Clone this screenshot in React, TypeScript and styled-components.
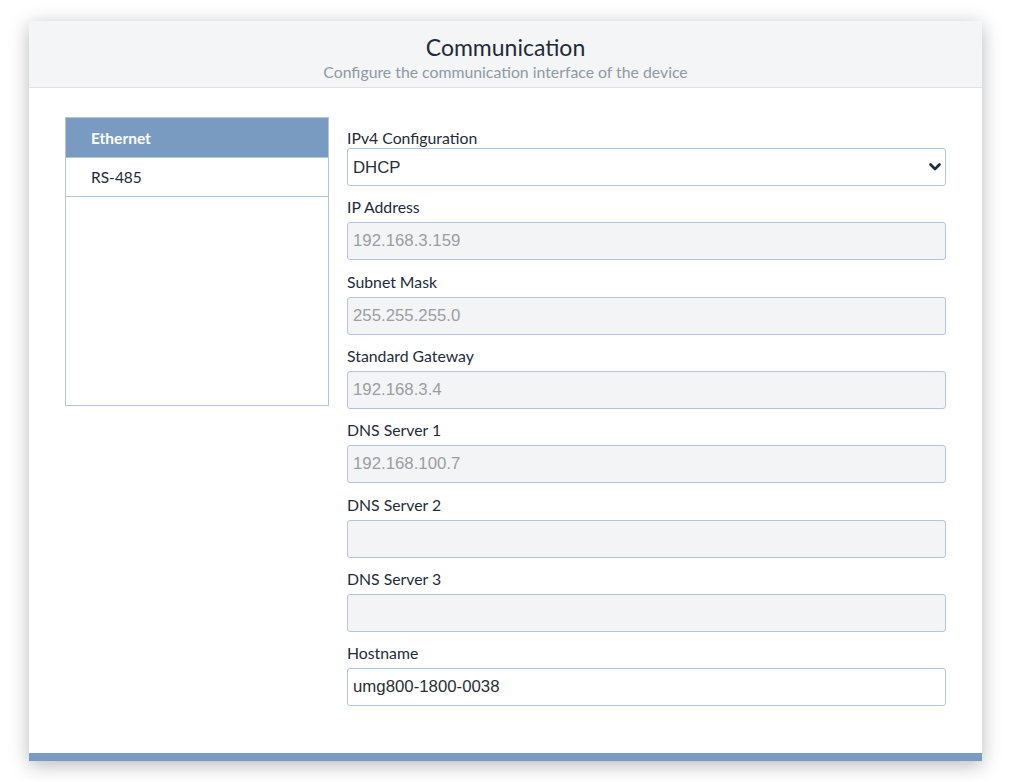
import React from "react";
import styled, { createGlobalStyle } from "styled-components";

const GlobalStyle = createGlobalStyle`
  html, body {
    margin: 0;
    padding: 0;
    background: #ffffff;
  }
  body {
    font-family: "Lato", "Open Sans", sans-serif;
  }
`;

const Page = styled.div`
  padding: 21px 28px 21px 29px;
`;

const Card = styled.div`
  width: 953px;
  background: #ffffff;
  box-shadow: 0 4px 18px rgba(0, 0, 0, 0.28);
  border-bottom: 8px solid #7a9bc1;
`;

const Header = styled.div`
  background: #f4f5f7;
  border-bottom: 1px solid #dde2e8;
  height: 67px;
  box-sizing: border-box;
  display: flex;
  flex-direction: column;
  align-items: center;
  padding-top: 12px;
`;

const Title = styled.h1`
  margin: 0;
  font-size: 23px;
  font-weight: 400;
  line-height: 28px;
  color: #1e2b3a;
`;

const Subtitle = styled.div`
  margin-top: 1px;
  font-size: 15.8px;
  line-height: 20px;
  color: #8e99a5;
`;

const Body = styled.div`
  display: flex;
  gap: 18px;
  padding: 29px 36px 47px 36px;
`;

const List = styled.div`
  width: 264px;
  height: 289px;
  box-sizing: border-box;
  border: 1px solid #b3c5da;
  flex-shrink: 0;
`;

const ListItem = styled.div<{ $active?: boolean }>`
  height: ${(p) => (p.$active ? "39px" : "38px")};
  display: flex;
  align-items: center;
  padding-left: 25px;
  font-size: 15.5px;
  font-weight: ${(p) => (p.$active ? 700 : 400)};
  color: ${(p) => (p.$active ? "#ffffff" : "#1e2b3a")};
  background: ${(p) => (p.$active ? "#7a9bc1" : "#ffffff")};
  border-bottom: 1px solid #b3c5da;
`;

const Form = styled.div`
  flex: 1;
  display: flex;
  flex-direction: column;
`;

const Field = styled.div<{ $tight?: boolean }>`
  display: flex;
  flex-direction: column;
  margin-top: ${(p) => (p.$tight ? "11px" : "11.33px")};
  gap: ${(p) => (p.$tight ? "0px" : "5px")};
`;

const Label = styled.label`
  font-size: 15.8px;
  line-height: 20px;
  color: #1e2b3a;
`;

const Input = styled.input`
  box-sizing: border-box;
  height: 38px;
  width: 100%;
  border: 1px solid #b3c5da;
  border-radius: 3px;
  padding: 0 5px;
  font-family: "Liberation Sans", Arial, sans-serif;
  font-size: 16.8px;
  color: #2a2f36;
  background: #ffffff;
  outline: none;

  &:disabled {
    background: #f3f4f6;
    color: #9a9ea3;
  }
`;

const SelectWrap = styled.div`
  position: relative;
`;

const Select = styled.select`
  box-sizing: border-box;
  height: 38px;
  width: 100%;
  border: 1px solid #b3c5da;
  border-radius: 3px;
  padding: 0 5px;
  font-family: "Liberation Sans", Arial, sans-serif;
  font-size: 16.8px;
  color: #2a2f36;
  background: #ffffff;
  appearance: none;
  outline: none;
`;

const Chevron = styled.svg`
  position: absolute;
  right: 5px;
  top: 15px;
  pointer-events: none;
`;

const fields = [
  { label: "IP Address", value: "192.168.3.159" },
  { label: "Subnet Mask", value: "255.255.255.0" },
  { label: "Standard Gateway", value: "192.168.3.4" },
  { label: "DNS Server 1", value: "192.168.100.7" },
  { label: "DNS Server 2", value: "" },
  { label: "DNS Server 3", value: "" },
];

export default function App() {
  return (
    <>
      <GlobalStyle />
      <Page>
        <Card>
          <Header>
            <Title>Communication</Title>
            <Subtitle>Configure the communication interface of the device</Subtitle>
          </Header>
          <Body>
            <List>
              <ListItem $active>Ethernet</ListItem>
              <ListItem>RS-485</ListItem>
            </List>
            <Form>
              <Field $tight>
                <Label>IPv4 Configuration</Label>
                <SelectWrap>
                  <Select defaultValue="dhcp">
                    <option value="dhcp">DHCP</option>
                    <option value="static">Static</option>
                  </Select>
                  <Chevron width="12" height="8" viewBox="0 0 12 8">
                    <path d="M1.5 1.5 L6 6 L10.5 1.5" fill="none" stroke="#1e2b3a" strokeWidth="2.6" strokeLinecap="round" strokeLinejoin="round" />
                  </Chevron>
                </SelectWrap>
              </Field>
              {fields.map((f) => (
                <Field key={f.label}>
                  <Label>{f.label}</Label>
                  <Input disabled defaultValue={f.value} />
                </Field>
              ))}
              <Field>
                <Label>Hostname</Label>
                <Input defaultValue="umg800-1800-0038" />
              </Field>
            </Form>
          </Body>
        </Card>
      </Page>
    </>
  );
}
